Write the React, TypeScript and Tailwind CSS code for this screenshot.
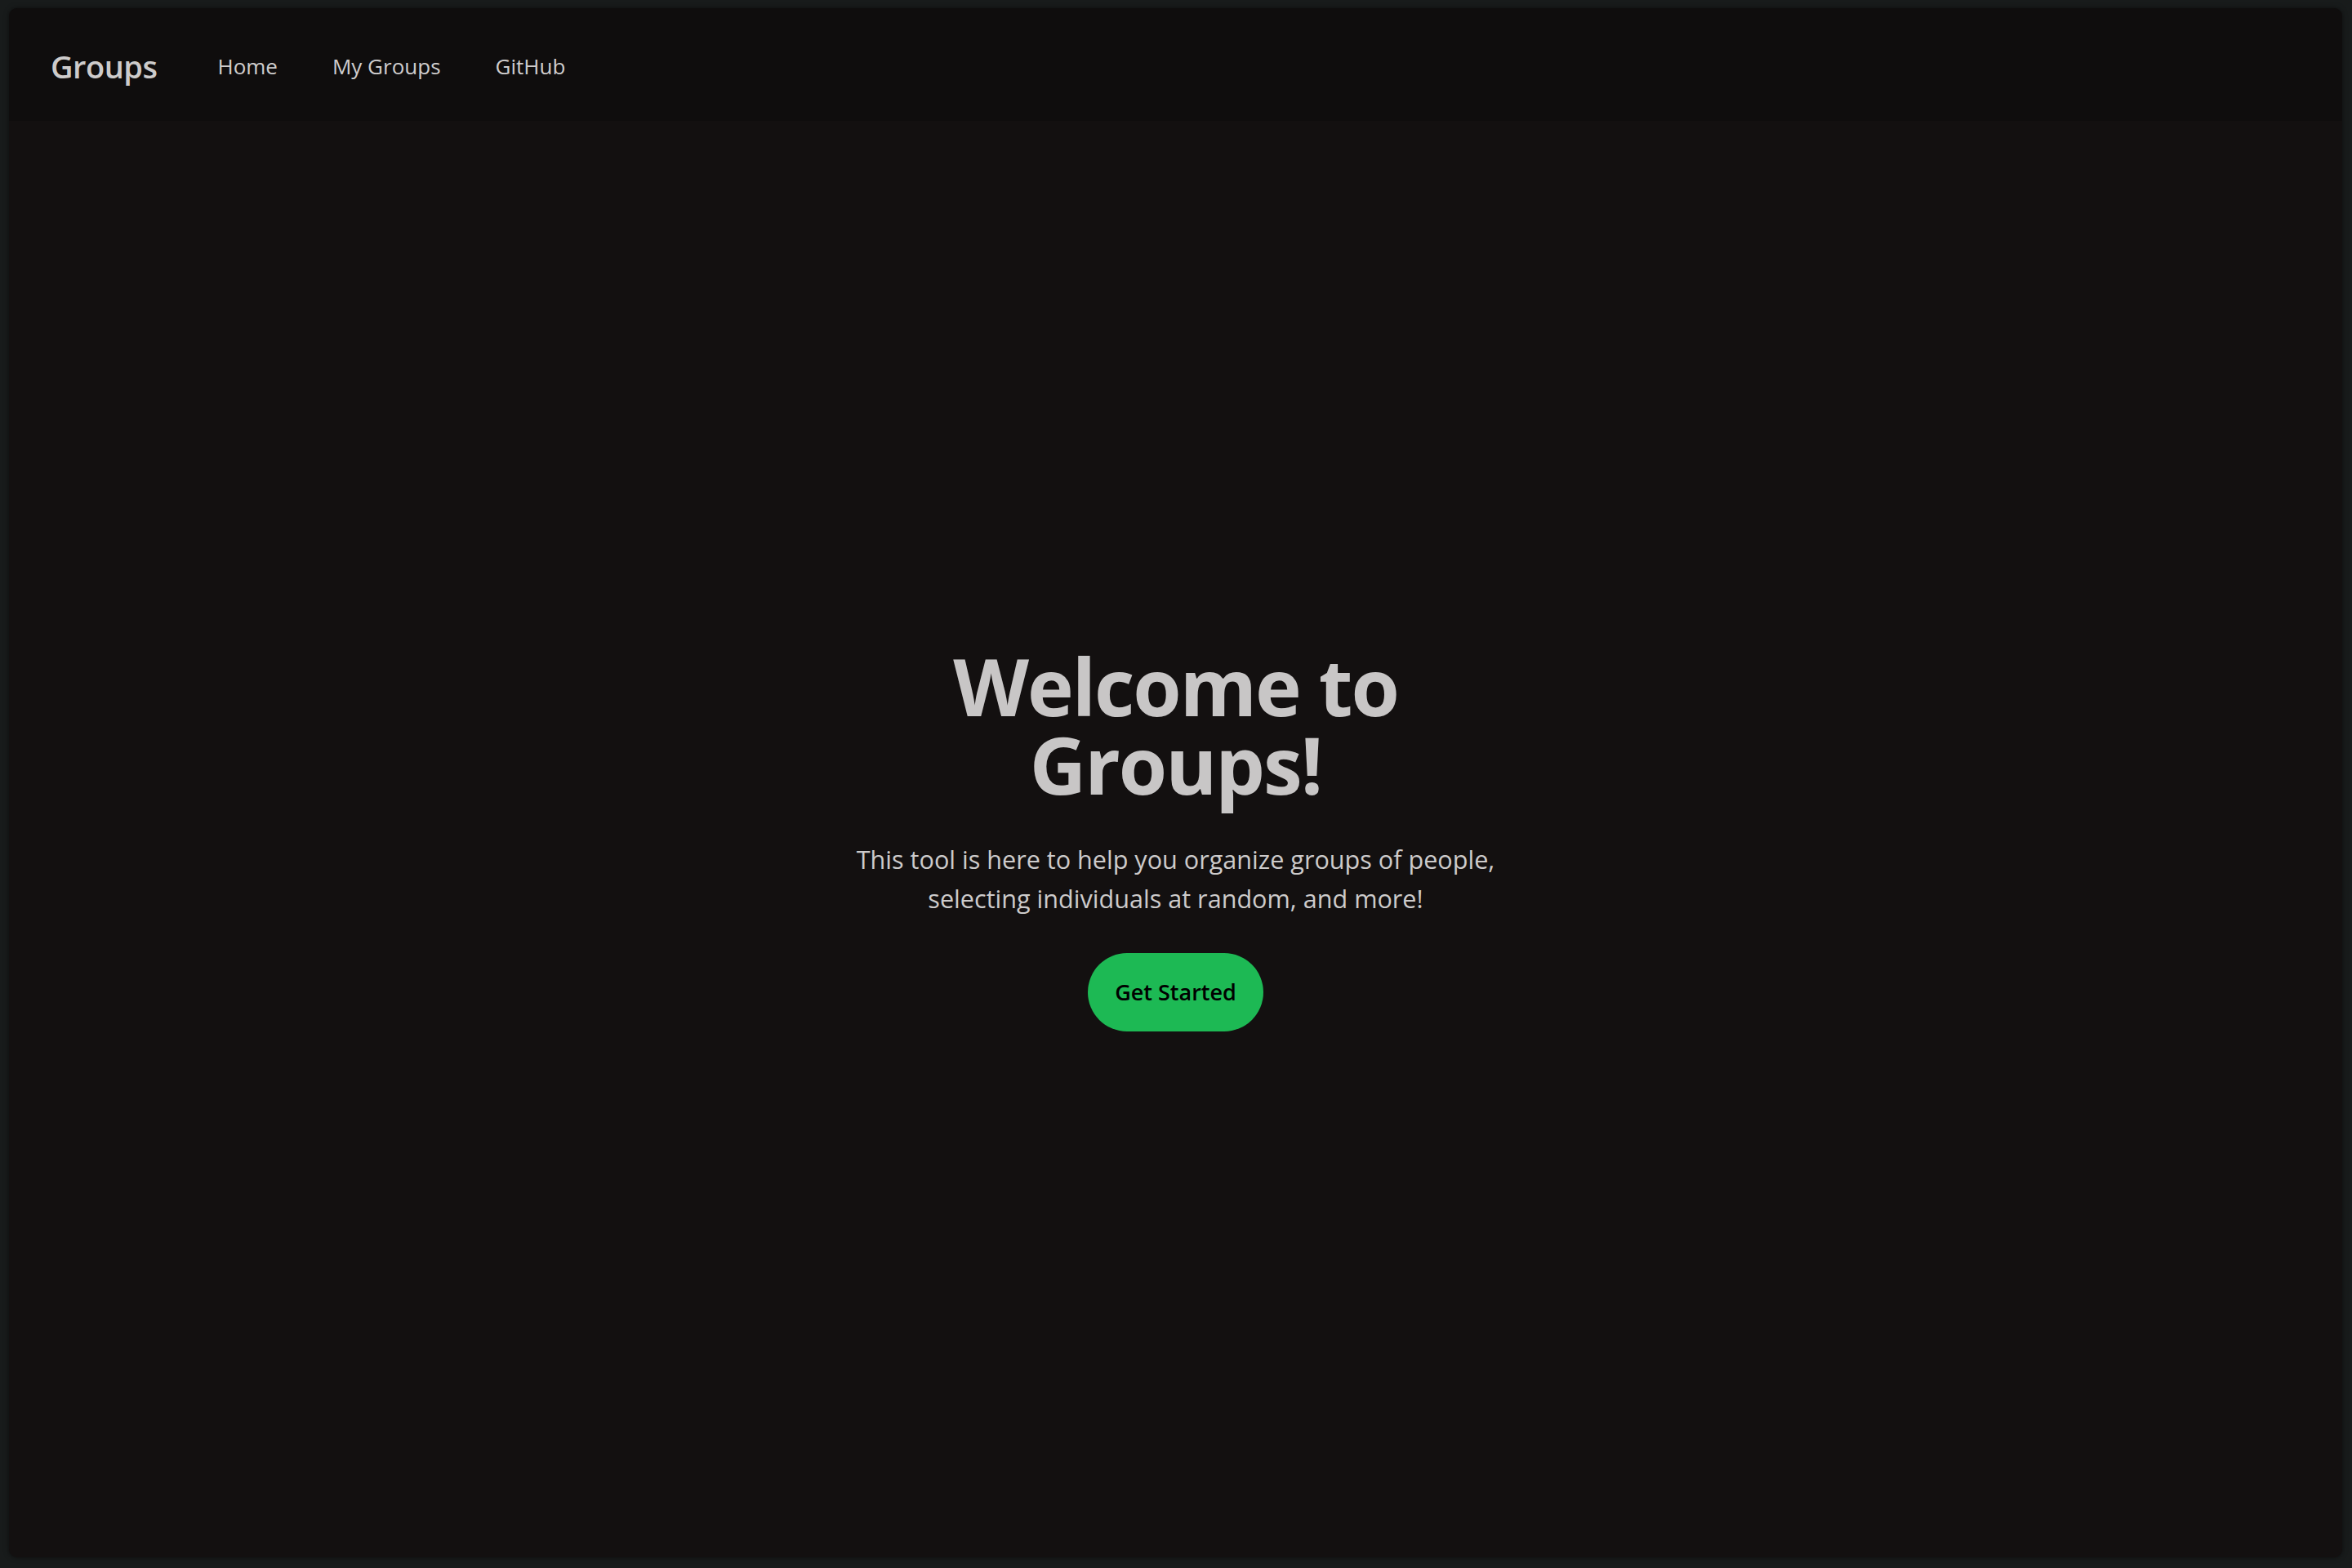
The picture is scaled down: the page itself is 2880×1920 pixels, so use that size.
import React from 'react';

const links = ['Home', 'My Groups', 'GitHub'];

const App: React.FC = () => {
  return (
    <div className="h-screen bg-[#181b1b] pt-[10px] pl-[11px] pr-[12px] pb-[13px] flex font-['Open_Sans',sans-serif]">
      <div className="flex-1 flex flex-col rounded-[10px] overflow-hidden bg-[#131010] shadow-[0_0_6px_rgba(0,0,0,0.5)]">
        <nav className="h-[138px] shrink-0 bg-[#0f0d0d] flex items-center pl-[51px] pt-[5px]">
          <a className="text-[38px] font-semibold text-[#cdcbcb] tracking-[-0.5px]">Groups</a>
          <div className="flex items-center gap-[67px] ml-[74px]">
            {links.map((l) => (
              <a key={l} className="text-[26px] text-[#cfcdcd]">
                {l}
              </a>
            ))}
          </div>
        </nav>

        <main className="flex-1 flex flex-col items-center justify-center text-center">
          <h1 className="max-w-[700px] text-[96px] leading-[96px] font-bold text-[#c8c6c6] tracking-[-2px]">
            Welcome to Groups!
          </h1>
          <p className="mt-[44px] text-[30.6px] leading-[48px] text-[#cdcbcb]">
            This tool is here to help you organize groups of people,
            <br />
            selecting individuals at random, and more!
          </p>
          <button className="mt-[43px] h-[96px] px-[33px] rounded-full bg-[#1db954] text-[27px] font-semibold text-black">
            Get Started
          </button>
        </main>
      </div>
    </div>
  );
};

export default App;
